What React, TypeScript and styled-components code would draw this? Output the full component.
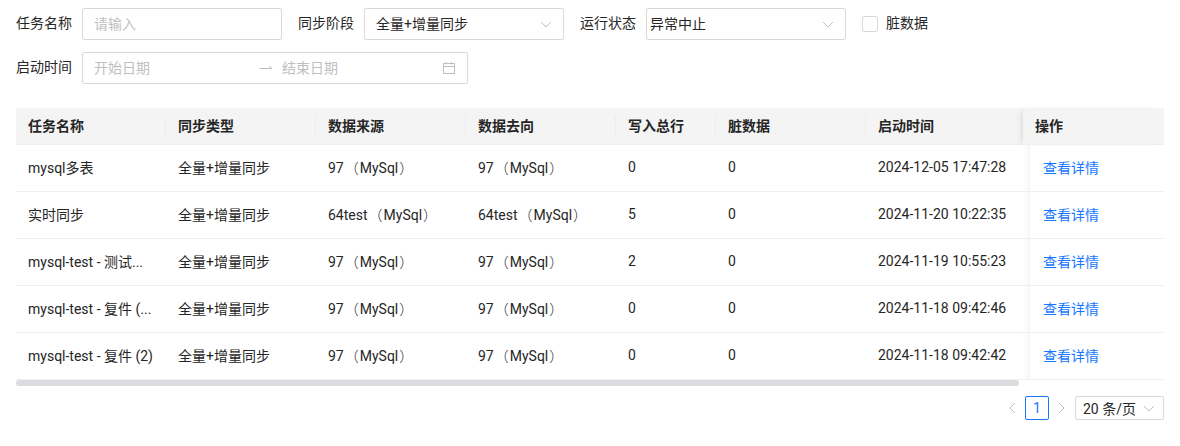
import React from 'react';
import styled, { createGlobalStyle } from 'styled-components';

const GlobalStyle = createGlobalStyle`
  html, body {
    margin: 0;
    padding: 0;
    background: #fff;
  }
  body {
    font-family: Roboto, "Noto Sans CJK SC", sans-serif;
    font-size: 14px;
    color: #262626;
  }
  * {
    box-sizing: border-box;
  }
`;

const Page = styled.div`
  width: 1180px;
  height: 446px;
  padding: 8px 16px 0;
  overflow: hidden;
`;

const FilterBar = styled.div`
  display: flex;
  flex-direction: column;
  gap: 12px;
`;

const FilterRow = styled.div`
  display: flex;
  align-items: center;
  height: 32px;
`;

const Label = styled.label`
  margin-right: 10px;
  padding-bottom: 2px;
  line-height: 30px;
  white-space: nowrap;
`;

const Field = styled.div<{ $width: number; $padding?: number }>`
  display: flex;
  align-items: center;
  width: ${(p) => p.$width}px;
  height: 32px;
  margin-right: 16px;
  padding: 0 ${(p) => p.$padding ?? 11}px;
  border: 1px solid #d9d9d9;
  border-radius: 2px;
  background: #fff;
`;

const Placeholder = styled.span`
  margin-bottom: 2px;
  color: #bfbfbf;
`;

const Value = styled.span`
  flex: 1;
  margin-bottom: 2px;
`;

const ChevronSlot = styled.span`
  display: flex;
  margin-right: 8px;
`;

const Check = styled.span`
  width: 16px;
  height: 16px;
  margin-right: 8px;
  border: 1px solid #d9d9d9;
  border-radius: 2px;
`;

const DateSide = styled.span<{ $width: number }>`
  width: ${(p) => p.$width}px;
  margin-bottom: 2px;
`;

const ArrowBox = styled.span`
  display: flex;
  width: 23px;
`;

const TableWrap = styled.div`
  width: 1148px;
  margin-top: 24px;
`;

const Grid = styled.div`
  display: grid;
  grid-template-columns: 150px 150px 150px 150px 100px 150px 157px 141px;
`;

const HeadCell = styled.div<{ $sep?: boolean }>`
  position: relative;
  height: 37px;
  padding: 0 12px 2px;
  display: flex;
  align-items: center;
  background: #f4f4f4;
  border-bottom: 1px solid #efefef;
  font-weight: 700;
  color: #262626;

  ${(p) =>
    p.$sep &&
    `&::before {
      content: '';
      position: absolute;
      left: -1px;
      top: 8px;
      bottom: 8px;
      width: 1px;
      background: #ececec;
    }`}
`;

const FixedHead = styled(HeadCell)`
  box-shadow: -4px 0 6px -3px rgba(0, 0, 0, 0.12);
`;

const Cell = styled.div`
  height: 47px;
  padding: 0 12px 2px;
  display: flex;
  align-items: center;
  border-bottom: 1px solid #efefef;
  white-space: nowrap;
  overflow: hidden;
`;

const FixedCell = styled(Cell)`
  position: relative;
  padding-left: 20px;
  &::before {
    content: '';
    position: absolute;
    left: 0;
    top: 0;
    bottom: 0;
    width: 7px;
    background: linear-gradient(to right, #ffffff, #f6f6f6);
  }
`;

const Paren = styled.span`
  padding: 0 1px;
  font-family: "Noto Sans CJK TC", sans-serif;
  font-weight: 300;
`;

const Link = styled.a`
  color: #1677ff;
`;

const ScrollBar = styled.div`
  width: 1003px;
  height: 6px;
  border-radius: 3px;
  background: #dadce0;
`;

const Pager = styled.div`
  display: flex;
  align-items: center;
  justify-content: flex-end;
  margin-top: 10px;
  height: 24px;
`;

const PagerArrow = styled.span`
  display: flex;
  width: 24px;
  justify-content: center;
`;

const PageNumber = styled.span`
  width: 24px;
  height: 24px;
  display: flex;
  align-items: center;
  justify-content: center;
  border: 1px solid #1677ff;
  border-radius: 2px;
  color: #1677ff;
`;

const SizeSelect = styled.div`
  display: flex;
  align-items: center;
  justify-content: space-between;
  width: 89px;
  height: 24px;
  margin-left: 2px;
  padding: 0 8px 0 7px;
  border: 1px solid #d9d9d9;
  border-radius: 2px;
`;

const Chevron = ({ dir = 'down' }: { dir?: string }) => {
  const points = dir === 'down' ? '1,4 6,9 11,4' : dir === 'left' ? '8,1 3,6 8,11' : '4,1 9,6 4,11';
  return (
    <svg width="12" height="12" viewBox="0 0 12 12" fill="none" stroke="#bfbfbf" strokeWidth="1">
      <polyline points={points} />
    </svg>
  );
};

const CalendarIcon = () => (
  <svg width="14" height="14" viewBox="0 0 14 14" fill="none" stroke="#bfbfbf" strokeWidth="1">
    <rect x="1.5" y="2.5" width="11" height="10" />
    <path d="M1.5 5.5h11M4.5 1v2.5M9.5 1v2.5" />
  </svg>
);

const ArrowIcon = () => (
  <svg width="14" height="12" viewBox="0 0 14 12" fill="none" stroke="#bfbfbf" strokeWidth="1">
    <path d="M0.5 6.5h12.5L10 4" />
  </svg>
);

const Source = ({ name }: { name: string }) => (
  <span>
    {name}
    <Paren>（</Paren>
    MySql
    <Paren>）</Paren>
  </span>
);

const heads = ['任务名称', '同步类型', '数据来源', '数据去向', '写入总行', '脏数据', '启动时间'];

const rows = [
  { task: 'mysql多表', source: '97', total: '0', time: '2024-12-05 17:47:28' },
  { task: '实时同步', source: '64test', total: '5', time: '2024-11-20 10:22:35' },
  { task: 'mysql-test - 测试...', source: '97', total: '2', time: '2024-11-19 10:55:23' },
  { task: 'mysql-test - 复件 (...', source: '97', total: '0', time: '2024-11-18 09:42:46' },
  { task: 'mysql-test - 复件 (2)', source: '97', total: '0', time: '2024-11-18 09:42:42' },
];

export default function App() {
  return (
    <Page>
      <GlobalStyle />
      <FilterBar>
        <FilterRow>
          <Label>任务名称</Label>
          <Field $width={200}>
            <Placeholder>请输入</Placeholder>
          </Field>
          <Label>同步阶段</Label>
          <Field $width={200}>
            <Value>全量+增量同步</Value>
            <Chevron />
          </Field>
          <Label>运行状态</Label>
          <Field $width={200} $padding={3}>
            <Value>异常中止</Value>
            <ChevronSlot>
              <Chevron />
            </ChevronSlot>
          </Field>
          <Check />
          <Label>脏数据</Label>
        </FilterRow>
        <FilterRow>
          <Label>启动时间</Label>
          <Field $width={386}>
            <DateSide $width={165}>
              <Placeholder>开始日期</Placeholder>
            </DateSide>
            <ArrowBox>
              <ArrowIcon />
            </ArrowBox>
            <DateSide $width={160}>
              <Placeholder>结束日期</Placeholder>
            </DateSide>
            <CalendarIcon />
          </Field>
        </FilterRow>
      </FilterBar>
      <TableWrap>
        <Grid>
          {heads.map((h, i) => (
            <HeadCell key={h} $sep={i > 0}>
              {h}
            </HeadCell>
          ))}
          <FixedHead>操作</FixedHead>
          {rows.map((r) => (
            <React.Fragment key={r.time}>
              <Cell>{r.task}</Cell>
              <Cell>全量+增量同步</Cell>
              <Cell>
                <Source name={r.source} />
              </Cell>
              <Cell>
                <Source name={r.source} />
              </Cell>
              <Cell>{r.total}</Cell>
              <Cell>0</Cell>
              <Cell>{r.time}</Cell>
              <FixedCell>
                <Link>查看详情</Link>
              </FixedCell>
            </React.Fragment>
          ))}
        </Grid>
        <ScrollBar />
      </TableWrap>
      <Pager>
        <PagerArrow>
          <Chevron dir="left" />
        </PagerArrow>
        <PageNumber>1</PageNumber>
        <PagerArrow>
          <Chevron dir="right" />
        </PagerArrow>
        <SizeSelect>
          <span>20 条/页</span>
          <Chevron />
        </SizeSelect>
      </Pager>
    </Page>
  );
}
